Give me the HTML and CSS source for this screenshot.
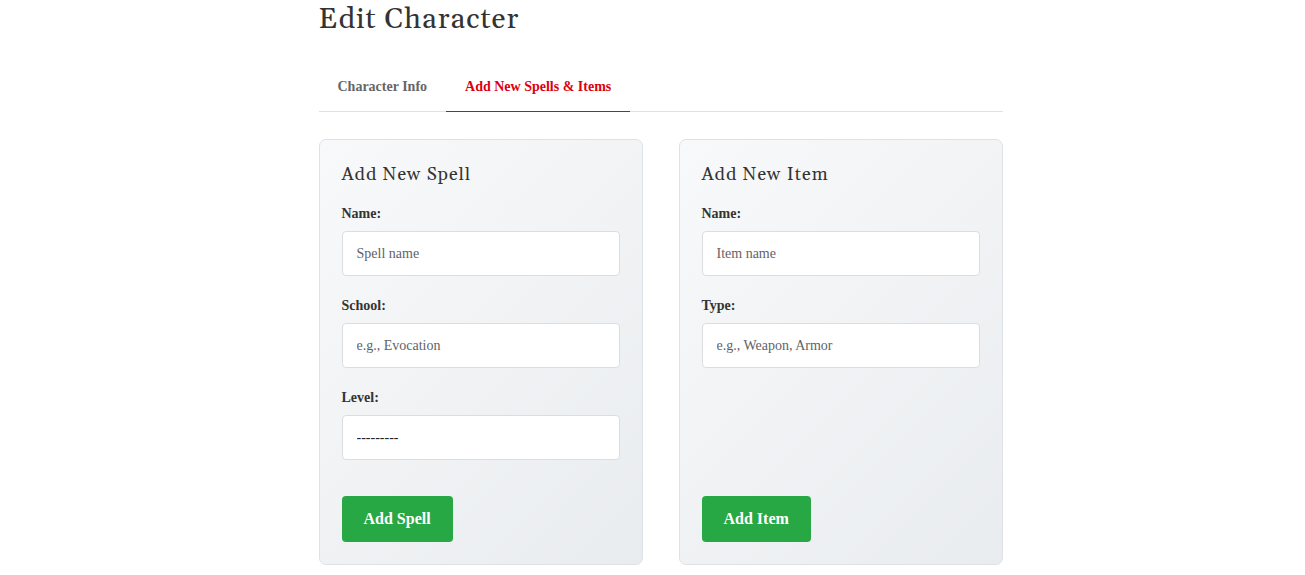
FILE: index.html
```html
<!DOCTYPE html>
<html lang="en">
<head>
<meta charset="utf-8">
<title>Edit Character</title>
<link rel="stylesheet" href="styles.css">
</head>
<body>
<main class="page">
  <h1 class="title">Edit Character</h1>
  <nav class="tabs">
    <a class="tab" href="#info">Character Info</a>
    <a class="tab tab-active" href="#add">Add New Spells &amp; Items</a>
  </nav>
  <div class="cards" id="add">
    <form class="card">
      <h2 class="card-title">Add New Spell</h2>
      <div class="fields">
        <div class="field">
          <label for="spell-name">Name:</label>
          <input class="control" id="spell-name" type="text" placeholder="Spell name">
        </div>
        <div class="field">
          <label for="spell-school">School:</label>
          <input class="control" id="spell-school" type="text" placeholder="e.g., Evocation">
        </div>
        <div class="field">
          <label for="spell-level">Level:</label>
          <select class="control" id="spell-level"><option>---------</option></select>
        </div>
      </div>
      <button class="button" type="submit">Add Spell</button>
    </form>
    <form class="card">
      <h2 class="card-title">Add New Item</h2>
      <div class="fields">
        <div class="field">
          <label for="item-name">Name:</label>
          <input class="control" id="item-name" type="text" placeholder="Item name">
        </div>
        <div class="field">
          <label for="item-type">Type:</label>
          <input class="control" id="item-type" type="text" placeholder="e.g., Weapon, Armor">
        </div>
      </div>
      <button class="button" type="submit">Add Item</button>
    </form>
  </div>
</main>
</body>
</html>
```
FILE: styles.css
```css
* { box-sizing: border-box; }
body {
  margin: 0;
  padding-left: 16px;
  background: #fff;
  color: #333;
  font-family: "Liberation Serif", "Times New Roman", serif;
  font-size: 14px;
}
.page {
  max-width: 684px;
  margin: 0 auto;
}
.title {
  margin: 0 0 22px;
  font-family: Gelasio, Georgia, serif;
  font-size: 29px;
  font-weight: 400;
  line-height: 40px;
  letter-spacing: 1px;
}
.tabs {
  display: flex;
  border-bottom: 1px solid #dee2e6;
  margin-bottom: 27px;
}
.tab {
  padding: 14px 19px;
  margin-bottom: -1px;
  border-bottom: 1px solid transparent;
  color: #666;
  font-weight: 700;
  font-size: 14px;
  line-height: 21px;
  text-decoration: none;
}
.tab-active {
  color: #dc0010;
  border-bottom-color: #c8101c;
}
.cards {
  display: grid;
  grid-template-columns: 1fr 1fr;
  gap: 36px;
}
.card {
  display: flex;
  flex-direction: column;
  align-items: flex-start;
  padding: 22px;
  border: 1px solid #dee2e6;
  border-radius: 7px;
  background: linear-gradient(135deg, #f8f9fa, #e9ecef);
}
.card-title {
  margin: 0 0 15px;
  font-family: Gelasio, Georgia, serif;
  font-size: 18px;
  font-weight: 400;
  line-height: 26px;
  letter-spacing: 1px;
}
.fields {
  display: flex;
  flex-direction: column;
  gap: 19px;
  width: 100%;
  margin-bottom: 36px;
}
.field {
  display: flex;
  flex-direction: column;
  gap: 6px;
}
.field label {
  font-weight: 700;
  line-height: 22px;
}
.control {
  width: 100%;
  height: 45px;
  padding: 0 14px;
  border: 1px solid #ddd;
  border-radius: 4px;
  appearance: none;
  background: #fff;
  color: #212529;
  font: inherit;
}
.control::placeholder {
  color: #5f6368;
  opacity: 1;
}
.button {
  margin-top: auto;
  padding: 0 22px;
  height: 46px;
  border: 0;
  border-radius: 4px;
  background: #28a745;
  color: #fff;
  font: 700 16px "Liberation Serif", "Times New Roman", serif;
}
```
